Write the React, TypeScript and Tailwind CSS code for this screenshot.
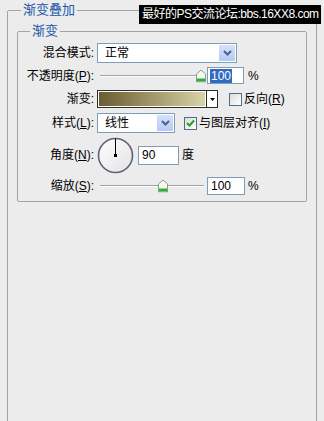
import React from "react";

const font = "font-['Liberation_Sans','Noto_Sans_CJK_SC',sans-serif]";

const Key = ({ k }: { k: string }) => (
  <>
    (<span className="underline">{k}</span>)
  </>
);

const Chevron = () => (
  <svg width="9" height="6" viewBox="0 0 9 6">
    <polyline points="1,1 4.5,4.5 8,1" fill="none" stroke="#4d6185" strokeWidth="2" />
  </svg>
);

const Select = ({ value, width }: { value: string; width: string }) => (
  <div className={`${width} h-[20px] flex items-stretch border border-[#7f9db9] bg-white`}>
    <span className="flex-1 pl-[7px] text-[12px] leading-[18px] text-black">{value}</span>
    <div className="w-[16px] m-[1px] flex items-center justify-center rounded-[1px] bg-gradient-to-b from-[#d6e2fd] to-[#b5c9f6]">
      <Chevron />
    </div>
  </div>
);

const Thumb = () => (
  <svg width="10" height="13" viewBox="0 0 10 13" className="shrink-0">
    <path d="M5 0.5 L9.5 4.5 L9.5 12.5 L0.5 12.5 L0.5 4.5 Z" fill="#f7f7f4" stroke="#8c9a8c" />
    <rect x="1" y="9" width="8" height="3" fill="#2fb12f" />
  </svg>
);

const Slider = ({ pos }: { pos: number }) => (
  <div className="w-[110px] h-full relative flex items-center">
    <div className="absolute left-[3px] right-[3px] top-1/2 -translate-y-1/2 h-[2px] border-t border-[#a2a2a2] border-b border-b-white" />
    <div className="absolute top-1/2 -translate-y-1/2" style={{ left: pos }}>
      <Thumb />
    </div>
  </div>
);

const NumBox = ({ value, selected, width }: { value: string; selected?: boolean; width: string }) => (
  <div className={`${width} h-full border border-[#7f9db9] bg-white flex items-center pl-[2px]`}>
    <span
      className={`text-[12px] leading-[14px] px-[1px] ${selected ? "bg-[#316ac5] text-white" : "text-black"}`}
    >
      {value}
    </span>
  </div>
);

const CheckBox = ({ checked }: { checked?: boolean }) => (
  <div className="w-[13px] h-[13px] border border-[#4a6f93] bg-gradient-to-br from-[#dcdcd7] to-white flex items-center justify-center">
    {checked && (
      <svg width="9" height="9" viewBox="0 0 9 9">
        <polyline points="1,4 3.5,6.5 8,1.5" fill="none" stroke="#21a121" strokeWidth="2" />
      </svg>
    )}
  </div>
);

const Label = ({ children }: { children: React.ReactNode }) => (
  <div className="w-[77px] shrink-0 text-right pr-[1px] text-[12px] leading-[14px] text-black">{children}</div>
);

export default function App() {
  return (
    <div className={`${font} relative w-[324px] h-[421px] overflow-hidden bg-[#ececec]`}>
      <fieldset className="ml-[7px] mt-[3px] w-[310px] h-[460px] border border-[#a3a3a3] rounded-[2px]">
        <legend className="ml-[13px] px-[2px] text-[13px] leading-[14px] text-[#2358a8]">渐变叠加</legend>

        <fieldset className="ml-[9px] mt-[7px] w-[290px] border border-[#a3a3a3] rounded-[2px] pb-[6px]">
          <legend className="ml-[12px] px-[2px] text-[13px] leading-[14px] text-[#2358a8]">渐变</legend>

          <div className="pt-[5px] flex flex-col">
            <div className="h-[20px] flex items-center">
              <Label>混合模式:</Label>
              <div className="ml-[2px]">
                <Select value="正常" width="w-[140px]" />
              </div>
            </div>

            <div className="mt-[4px] h-[17px] flex items-center">
              <Label>
                不透明度<Key k="P" />:
              </Label>
              <div className="ml-[2px] h-full flex items-center">
                <Slider pos={99} />
                <NumBox value="100" selected width="w-[37px]" />
                <span className="ml-[4px] text-[12px]">%</span>
              </div>
            </div>

            <div className="mt-[6px] h-[18px] flex items-center">
              <Label>渐变:</Label>
              <div className="ml-[2px] h-full flex items-center">
                <div className="w-[121px] h-full flex border border-[#2b2b2b]">
                  <div className="flex-1 border border-white bg-gradient-to-r from-[#6a5c33] to-[#dad3a8]" />
                  <div className="w-[11px] bg-white border-l border-[#2b2b2b] flex items-center justify-center">
                    <svg width="5" height="3" viewBox="0 0 5 3">
                      <polygon points="0,0 5,0 2.5,3" fill="#000" />
                    </svg>
                  </div>
                </div>
                <div className="ml-[11px]">
                  <CheckBox />
                </div>
                <span className="ml-[2px] text-[12px] leading-[14px]">
                  反向<Key k="R" />
                </span>
              </div>
            </div>

            <div className="mt-[5px] h-[20px] flex items-center">
              <Label>
                样式<Key k="L" />:
              </Label>
              <div className="ml-[2px] flex items-center">
                <Select value="线性" width="w-[78px]" />
                <div className="ml-[9px]">
                  <CheckBox checked />
                </div>
                <span className="ml-[2px] text-[12px] leading-[14px]">
                  与图层对齐<Key k="I" />
                </span>
              </div>
            </div>

            <div className="mt-[4px] h-[36px] flex items-center">
              <Label>
                角度<Key k="N" />:
              </Label>
              <div className="ml-[2px] h-full flex items-center">
                <svg width="37" height="37" viewBox="0 0 37 37">
                  <defs>
                    <linearGradient id="dial" x1="0" y1="0" x2="1" y2="1">
                      <stop offset="0" stopColor="#ffffff" />
                      <stop offset="1" stopColor="#e2e2e2" />
                    </linearGradient>
                  </defs>
                  <circle cx="18.5" cy="18.5" r="17" fill="url(#dial)" stroke="#5d6274" strokeWidth="1.6" />
                  <line x1="18.5" y1="1.5" x2="18.5" y2="18.5" stroke="#000" strokeWidth="1" />
                  <rect x="17" y="17" width="3" height="3" fill="#000" />
                </svg>
                <div className="ml-[4px] h-[19px]">
                  <NumBox value="90" width="w-[41px]" />
                </div>
                <span className="ml-[3px] text-[12px] leading-[14px]">度</span>
              </div>
            </div>

            <div className="mt-[4px] h-[18px] flex items-center">
              <Label>
                缩放<Key k="S" />:
              </Label>
              <div className="ml-[2px] h-full flex items-center">
                <Slider pos={61} />
                <NumBox value="100" width="w-[38px]" />
                <span className="ml-[3px] text-[12px]">%</span>
              </div>
            </div>
          </div>
        </fieldset>
      </fieldset>

      <div className="absolute left-[139px] top-[5px] w-[182px] h-[19px] bg-black text-white text-[12px] leading-[19px] pl-[3px] tracking-[-0.5px] whitespace-nowrap">
        最好的PS交流论坛:bbs.16XX8.com
      </div>
    </div>
  );
}
